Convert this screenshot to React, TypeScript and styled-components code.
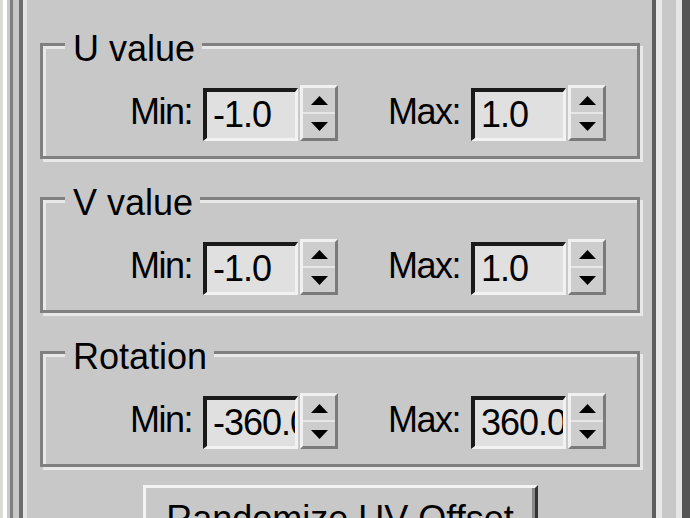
import React from "react";
import styled, { createGlobalStyle } from "styled-components";

const GlobalStyle = createGlobalStyle`
  html, body {
    margin: 0;
    padding: 0;
    background: #c8c8c8;
    overflow: hidden;
  }
  body {
    font-family: "Liberation Sans", Arial, sans-serif;
    color: #000;
  }
`;

const Window = styled.div`
  width: 690px;
  height: 518px;
  box-sizing: border-box;
  display: flex;
  background: #c8c8c8;
  border-left: 3px solid #dcdcd6;
  border-right: 8px solid #555555;
  padding-left: 7px;
  box-shadow: inset 4px 0 0 #ffffff;
  overflow: hidden;
`;

const Sunken = styled.div`
  flex: 1;
  display: flex;
  border-left: 3px solid #808080;
  border-right: 6px solid #e6e6e6;
  padding: 0 20px 0 6px;
`;

const Rollout = styled.div`
  flex: 1;
  display: flex;
  flex-direction: column;
  border-left: 4px solid #6e6e6e;
  border-right: 4px solid #5e5e5e;
  box-shadow: inset 4px 0 0 #e4e4e4, 6px 0 0 #e8e8e8;
  padding: 43px 12px 0 17px;
  overflow: hidden;
`;

const Group = styled.div`
  position: relative;
  flex-shrink: 0;
  height: 116px;
  box-sizing: border-box;
  border: 3px solid #808080;
  box-shadow: inset 3px 3px 0 #e8e8e8, 3px 3px 0 #e8e8e8;
  margin-bottom: 38px;
  &:last-of-type {
    margin-bottom: 0;
  }
`;

const GroupTitle = styled.span`
  position: absolute;
  top: -17px;
  left: 22px;
  padding: 0 7px 0 8px;
  background: #c8c8c8;
  font-size: 36px;
  line-height: 40px;
  white-space: nowrap;
`;

const Row = styled.div`
  display: flex;
  align-items: flex-end;
  padding: 39px 0 0 69px;
`;

const Field = styled.div<{ $offset?: number }>`
  display: flex;
  align-items: flex-end;
  margin-left: ${(p) => p.$offset ?? 0}px;
`;

const Label = styled.span`
  width: 80px;
  margin: 0 11px 9px 0;
  text-align: right;
  font-size: 36px;
  line-height: 40px;
  letter-spacing: -1.5px;
  white-space: nowrap;
`;

const Edit = styled.div`
  width: 95px;
  height: 53px;
  box-sizing: border-box;
  margin-right: 2px;
  border-style: solid;
  border-width: 4px 3px 3px 4px;
  border-color: #1a1a1a #f2f2f2 #f2f2f2 #1a1a1a;
  background: #e0e0e0;
  padding-left: 6px;
  font-size: 36px;
  line-height: 46px;
  letter-spacing: -1px;
  white-space: nowrap;
  overflow: hidden;
`;

const Spinner = styled.div`
  width: 38px;
  height: 56px;
  box-sizing: border-box;
  display: flex;
  flex-direction: column;
  border-style: solid;
  border-width: 3px;
  border-color: #f0f0f0 #7a7a7a #7a7a7a #f0f0f0;
  background: #cdcdcd;
`;

const SpinButton = styled.div<{ $down?: boolean }>`
  flex: 1;
  display: flex;
  align-items: center;
  justify-content: center;
  border-top: ${(p) => (p.$down ? "2px solid #e6e6e6" : "none")};
`;

const ActionButton = styled.button`
  display: block;
  width: 395px;
  height: 67px;
  flex-shrink: 0;
  margin: 18px auto 0;
  padding: 0;
  box-sizing: border-box;
  border-style: solid;
  border-width: 3px;
  border-color: #f4f4f4 #333333 #333333 #f4f4f4;
  box-shadow: inset -3px -3px 0 #888888;
  background: #c8c8c8;
  font-family: "Liberation Sans", Arial, sans-serif;
  font-size: 36px;
  line-height: 40px;
  color: #000;
  white-space: nowrap;
`;

const Arrow = ({ down }: { down?: boolean }) => (
  <svg width="17" height="9" viewBox="0 0 17 9">
    {down ? (
      <polygon points="0,0 17,0 8.5,9" fill="#000" />
    ) : (
      <polygon points="0,9 17,9 8.5,0" fill="#000" />
    )}
  </svg>
);

const SpinField = ({
  label,
  value,
  offset,
}: {
  label: string;
  value: string;
  offset?: number;
}) => (
  <Field $offset={offset}>
    <Label>{label}</Label>
    <Edit>{value}</Edit>
    <Spinner>
      <SpinButton>
        <Arrow />
      </SpinButton>
      <SpinButton $down>
        <Arrow down />
      </SpinButton>
    </Spinner>
  </Field>
);

const groups = [
  { title: "U value", min: "-1.0", max: "1.0" },
  { title: "V value", min: "-1.0", max: "1.0" },
  { title: "Rotation", min: "-360.0", max: "360.0" },
];

export default function App() {
  return (
    <>
      <GlobalStyle />
      <Window>
        <Sunken>
          <Rollout>
            {groups.map((g) => (
              <Group key={g.title}>
                <GroupTitle>{g.title}</GroupTitle>
                <Row>
                  <SpinField label="Min:" value={g.min} />
                  <SpinField label="Max:" value={g.max} offset={42} />
                </Row>
              </Group>
            ))}
            <ActionButton>Randomize UV Offset</ActionButton>
          </Rollout>
        </Sunken>
      </Window>
    </>
  );
}
